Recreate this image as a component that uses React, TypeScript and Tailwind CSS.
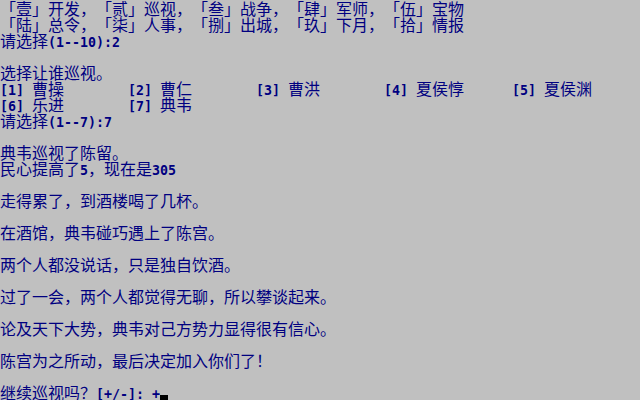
import React from "react";

const CJK = "text-[16px] leading-[16px] [font-family:'Noto_Sans_CJK_SC',sans-serif] [text-spacing-trim:space-all]";
const ASC = "text-[13.29px] leading-[16px] font-bold [font-family:'DejaVu_Sans_Mono',monospace]";

function T({ s }: { s: string }) {
  const parts: { a: boolean; t: string }[] = [];
  for (const ch of s) {
    const a = ch.charCodeAt(0) < 128;
    const last = parts[parts.length - 1];
    if (last && last.a === a) last.t += ch;
    else parts.push({ a, t: ch });
  }
  return (
    <>
      {parts.map((p, i) => (
        <span key={i} className={p.a ? ASC : CJK}>
          {p.t}
        </span>
      ))}
    </>
  );
}

function Line({ s, children }: { s?: string; children?: React.ReactNode }) {
  return (
    <div className="h-[16px] leading-[16px] text-[16px] whitespace-pre [text-spacing-trim:space-all]">
      {s !== undefined ? <T s={s} /> : children}
    </div>
  );
}

const officers1 = ["[1] 曹操", "[2] 曹仁", "[3] 曹洪", "[4] 夏侯惇", "[5] 夏侯渊"];
const officers2 = ["[6] 乐进", "[7] 典韦"];

function Row({ items }: { items: string[] }) {
  return (
    <div className="h-[16px] grid grid-cols-[128px_128px_128px_128px_128px] whitespace-pre">
      {items.map((it, i) => (
        <div key={i} className="h-[16px] leading-[16px] text-[16px]">
          <T s={it} />
        </div>
      ))}
    </div>
  );
}

export default function App() {
  return (
    <div className="w-[640px] h-[400px] bg-[#c0c0c0] text-[#000080] overflow-hidden flex flex-col">
      <Line s="「壹」开发，「贰」巡视，「叁」战争，「肆」军师，「伍」宝物" />
      <Line s="「陆」总令，「柒」人事，「捌」出城，「玖」下月，「拾」情报" />
      <Line s="请选择(1--10):2" />
      <Line s="" />
      <Line s="选择让谁巡视。" />
      <Row items={officers1} />
      <Row items={officers2} />
      <Line s="请选择(1--7):7" />
      <Line s="" />
      <Line s="典韦巡视了陈留。" />
      <Line s="民心提高了5，现在是305" />
      <Line s="" />
      <Line s="走得累了，到酒楼喝了几杯。" />
      <Line s="" />
      <Line s="在酒馆，典韦碰巧遇上了陈宫。" />
      <Line s="" />
      <Line s="两个人都没说话，只是独自饮酒。" />
      <Line s="" />
      <Line s="过了一会，两个人都觉得无聊，所以攀谈起来。" />
      <Line s="" />
      <Line s="论及天下大势，典韦对己方势力显得很有信心。" />
      <Line s="" />
      <Line s="陈宫为之所动，最后决定加入你们了！" />
      <Line s="" />
      <div className="h-[16px] flex items-end whitespace-pre [text-spacing-trim:space-all]">
        <div className="h-[16px] leading-[16px] text-[16px]">
          <T s="继续巡视吗？[+/-]: +" />
        </div>
        <span className="block w-[8px] h-[5px] bg-black" />
      </div>
    </div>
  );
}
